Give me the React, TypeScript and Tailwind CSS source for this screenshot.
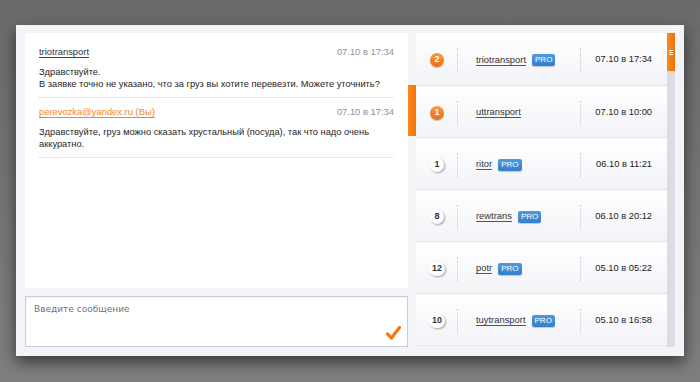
import { Fragment } from 'react';

type Dialog = { count: number; unread: boolean; name: string; pro: boolean; date: string; active?: boolean };

const DIALOGS: Dialog[] = [
  { count: 2, unread: true, name: 'triotransport', pro: true, date: '07.10 в 17:34' },
  { count: 1, unread: true, name: 'uttransport', pro: false, date: '07.10 в 10:00', active: true },
  { count: 1, unread: false, name: 'ritor', pro: true, date: '06.10 в 11:21' },
  { count: 8, unread: false, name: 'rewtrans', pro: true, date: '06.10 в 20:12' },
  { count: 12, unread: false, name: 'potr', pro: true, date: '05.10 в 05:22' },
  { count: 10, unread: false, name: 'tuytransport', pro: true, date: '05.10 в 16:58' },
];

const MESSAGES = [
  {
    author: 'triotransport',
    mine: false,
    date: '07.10 в 17:34',
    lines: ['Здравствуйте.', 'В заявке точно не указано, что за груз вы хотите перевезти. Можете уточнить?'],
  },
  {
    author: 'perevozka@yandex.ru (Вы)',
    mine: true,
    date: '07.10 в 17:34',
    lines: ['Здравствуйте, груз можно сказать хрустальный (посуда), так что надо очень', 'аккуратно.'],
  },
];

function CountBadge({ count, unread }: { count: number; unread: boolean }) {
  return unread ? (
    <span className="flex h-[14px] w-[14px] items-center justify-center rounded-full bg-gradient-to-b from-[#fb9a3c] to-[#ee6a0c] text-[9px] font-semibold text-white shadow-[0_1px_1px_rgba(0,0,0,0.25)]">
      {count}
    </span>
  ) : (
    <span className="flex h-[14px] min-w-[14px] items-center justify-center rounded-full bg-white px-[3px] text-[9px] font-semibold text-[#333] shadow-[1px_1px_2px_rgba(0,0,0,0.35)]">
      {count}
    </span>
  );
}

function DialogRow({ d, first }: { d: Dialog; first: boolean }) {
  return (
    <div
      className={
        (first ? 'h-[53px] ' : 'h-[52px] ') +
        'relative flex shrink-0 items-center border-b border-dotted border-[#cfd1da] bg-gradient-to-b from-white to-[#f2f3f7] pt-[2px]'
      }
    >
      {d.active && <span className="absolute top-[-1px] left-[-8px] h-[51px] w-[8px] bg-gradient-to-r from-[#fb8a1c] to-[#f57206]" />}
      <div className="flex w-[41px] justify-center pl-[1px]">
        <CountBadge count={d.count} unread={d.unread} />
      </div>
      <span className="h-[24px] border-l border-dotted border-[#c9cbd4]" />
      <div className="flex w-[122px] items-center gap-[6px] pl-[18px]">
        <span className="border-b border-[#555] text-[9.4px] leading-[10px] text-[#333]">{d.name}</span>
        {d.pro && (
          <span className="rounded-[2px] bg-gradient-to-b from-[#4c9be0] to-[#347fcb] px-[3px] text-[8px] leading-[12px] text-white shadow-[0_1px_1px_rgba(0,0,0,0.2)]">
            PRO
          </span>
        )}
      </div>
      <span className="h-[24px] border-l border-dotted border-[#c9cbd4]" />
      <div className="flex flex-1 justify-end pr-[15px] text-[9.3px] text-[#222]">{d.date}</div>
    </div>
  );
}

export default function App() {
  return (
    <div
      className="h-[382px] w-[700px] overflow-hidden bg-gradient-to-b from-[#6a6a6a] to-[#7e7e7e] pt-[25px] pl-[16px]"
      style={{ fontFamily: '"Liberation Sans", Arial, sans-serif' }}
    >
      <div className="flex h-[331px] w-[668px] gap-[8px] bg-[#f3f4f8] p-[8px] pb-[9px] pl-[9px] shadow-[0_6px_14px_rgba(0,0,0,0.55)]">
        {/* ── Chat ─────────────────────────────────────────── */}
        <div className="flex w-[383px] flex-col gap-[8px]">
          <div className="h-[255px] bg-white px-[14px] pt-[5px]">
            {MESSAGES.map((m) => (
              <Fragment key={m.author}>
                <div className="border-b border-dotted border-[#d3d5dc] pt-[8px] pb-[7px]">
                  <div className="flex items-center justify-between leading-[12px]">
                    <span
                      className={
                        m.mine
                          ? 'border-b border-[#f5841f] text-[9.4px] leading-[10px] text-[#f5841f]'
                          : 'border-b border-[#444] text-[9.4px] leading-[10px] text-[#333]'
                      }
                    >
                      {m.author}
                    </span>
                    <span className="text-[9.4px] text-[#8d909c]">{m.date}</span>
                  </div>
                  <div className="mt-[8px] text-[9.3px] leading-[12px] text-[#1e1e1e]">
                    {m.lines.map((l) => (
                      <div key={l}>{l}</div>
                    ))}
                  </div>
                </div>
              </Fragment>
            ))}
          </div>
          <div className="relative h-[51px] border border-[#c9ccd9] bg-white px-[8px] pt-[6px] shadow-[inset_0_1px_2px_rgba(0,0,0,0.06)]">
            <div className="text-[9px] leading-[12px] text-[#6d7182]" style={{ fontFamily: '"DejaVu Sans", sans-serif' }}>
              Введите сообщение
            </div>
            <svg className="absolute right-[6px] bottom-[6px]" width="15" height="14" viewBox="0 0 15 14">
              <path d="M1.5 8 L5.5 12 L13.5 1.5" fill="none" stroke="#f5780f" strokeWidth="3.2" strokeLinejoin="round" strokeLinecap="round" />
            </svg>
          </div>
        </div>

        {/* ── Dialog list ──────────────────────────────────── */}
        <div className="flex h-[314px] flex-1">
          <div className="flex w-[251px] flex-col">
            {DIALOGS.map((d, i) => (
              <DialogRow key={d.name} d={d} first={i === 0} />
            ))}
          </div>
          <div className="flex w-[8px] flex-col bg-[#dcdde4]">
            <div className="flex h-[38px] items-center justify-center bg-gradient-to-r from-[#fb8a1c] to-[#f27005]">
              <div className="flex flex-col gap-[1px]">
                <span className="h-[1px] w-[4px] bg-white" />
                <span className="h-[1px] w-[4px] bg-white" />
                <span className="h-[1px] w-[4px] bg-white" />
              </div>
            </div>
          </div>
        </div>
      </div>
    </div>
  );
}
